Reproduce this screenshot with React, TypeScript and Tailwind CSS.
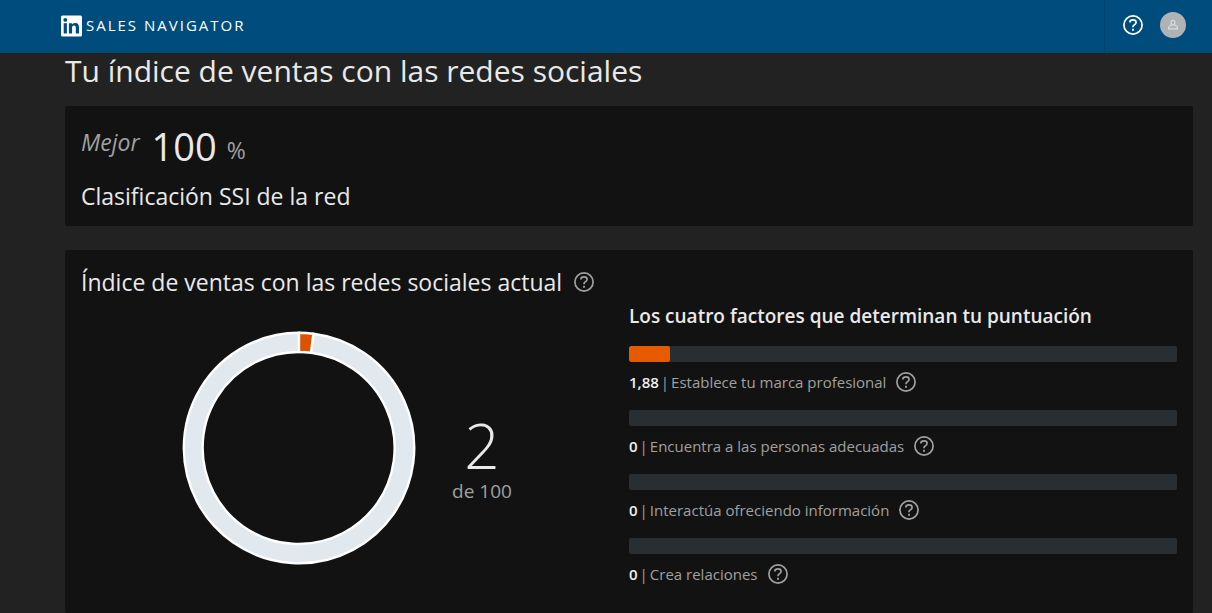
import clsx from "clsx";

const factors = [
  { score: "1,88", percent: 7.52, label: "Establece tu marca profesional" },
  { score: "0", percent: 0, label: "Encuentra a las personas adecuadas" },
  { score: "0", percent: 0, label: "Interactúa ofreciendo información" },
  { score: "0", percent: 0, label: "Crea relaciones" },
];

const HelpIcon = ({ className }: { className?: string }) => (
  <svg
    className={clsx("size-5 shrink-0", className)}
    viewBox="0 0 20 20"
    fill="none"
    aria-hidden="true"
  >
    <circle cx="10" cy="10" r="9.1" stroke="currentColor" strokeWidth="1.7" />
    <path
      d="M6.9 7.6V7.2C6.9 5.7 8.1 4.8 10 4.8s3.1 1 3.1 2.5c0 1.2-.6 1.9-1.6 2.4-.9.5-1.5.9-1.5 2v.5"
      stroke="currentColor"
      strokeWidth="1.7"
    />
    <rect x="9" y="13.7" width="2" height="2" rx="0.5" fill="currentColor" />
  </svg>
);

const HelpButton = ({ label, className }: { label: string; className?: string }) => (
  <button type="button" aria-label={label} className={clsx("cursor-pointer", className)}>
    <HelpIcon />
  </button>
);

const Logo = () => (
  <a href="#" className="flex items-center gap-1 text-white">
    <svg className="size-[22px]" viewBox="0 0 22 22" aria-hidden="true">
      <rect x="1" y="0.5" width="21" height="21" rx="1.5" fill="#fff" />
      <circle cx="5.3" cy="4.9" r="1.9" fill="#004c7c" />
      <rect x="3.7" y="8.2" width="3.2" height="10.3" fill="#004c7c" />
      <path
        d="M8.900 8.200h3v1.400c.5-.9 1.600-1.700 3.200-1.700 3 0 3.900 2 3.900 4.600v6h-3.200v-5.300c0-1.400-.2-2.700-1.800-2.700s-1.900 1.200-1.900 2.600v5.400H8.900z"
        fill="#004c7c"
      />
    </svg>
    <span className="text-[15px] tracking-[2px] uppercase">Sales Navigator</span>
  </a>
);

const Header = () => (
  <header className="flex h-[53px] shrink-0 bg-[#004c7c] pl-15">
    <div className="flex h-[51px] items-center">
      <Logo />
    </div>
    <div className="ml-auto flex items-center gap-[17px] border-l border-[#004470] pr-[26px] pb-[3px] pl-[18px]">
      <HelpButton label="Ayuda" className="text-white" />
      <button
        type="button"
        aria-label="Cuenta"
        className="flex size-[26px] cursor-pointer items-center justify-center rounded-full bg-[#b0b3b6] text-[#dcdee0]"
      >
        <svg
          className="size-3"
          viewBox="0 0 12 12"
          fill="none"
          stroke="currentColor"
          strokeWidth="1.1"
          aria-hidden="true"
        >
          <path d="M6 1.2c1.2 0 1.9.8 1.9 2S7.2 6 6 6 4.1 4.400 4.100 3.200s.7-2 1.900-2z" />
          <path d="M4.600 5.800 2.200 7.400c-.5.400-.7.800-.7 1.400v1.100h9V8.800c0-.6-.2-1-.7-1.400L7.400 5.800" />
        </svg>
      </button>
    </div>
  </header>
);

const ScoreRing = () => (
  <svg
    className="size-[234px] shrink-0"
    viewBox="-117 -117 234 234"
    role="img"
    aria-label="2 de 100"
  >
    <g stroke="#fff" strokeWidth="2.4" strokeLinejoin="round">
      <path
        d="M14.4 -114.3A115.2 115.2 0 1 1 0 -115.2V-96A96 96 0 1 0 12 -95.2Z"
        fill="#e1e8ee"
      />
      <path d="M0 -115.2A115.2 115.2 0 0 1 14.4 -114.3L12 -95.2A96 96 0 0 0 0 -96Z" fill="#dd5200" />
    </g>
  </svg>
);

const Factor = ({ score, percent, label }: (typeof factors)[number]) => (
  <li>
    <div className="h-4 overflow-hidden rounded-xs bg-[#282e32]">
      <div className="h-full rounded-xs bg-[#e65a00]" style={{ width: `${percent}%` }} />
    </div>
    <div className="mt-2 flex h-6 items-center text-[15px] text-[#a0a0a0]">
      <p className="flex gap-0.5">
        <strong className="font-semibold text-[#efefef]">{score}</strong>
        <span>|</span>
        <span>{label}</span>
      </p>
      <HelpButton label={`Ayuda: ${label}`} className="ml-2.5" />
    </div>
  </li>
);

export default function App() {
  return (
    <div className="flex min-h-screen flex-col bg-[#222] font-['Open_Sans','Noto_Sans',sans-serif] text-[#e9e9e9]">
      <Header />
      <main className="flex grow flex-col pr-[19px] pl-[65px]">
        <h1 className="text-[30px] leading-9">Tu índice de ventas con las redes sociales</h1>

        <section className="mt-[17px] rounded-xs bg-[#121212] px-4 pt-4 pb-3">
          <div className="flex h-12 items-center">
            <em className="mb-2 text-[23px] text-[#a0a0a0]">Mejor</em>
            <span className="ml-3 text-[38px] leading-12">100</span>
            <span className="mt-2 ml-2.5 text-[23px] text-[#a0a0a0]">%</span>
          </div>
          <h2 className="mt-2 text-[23px] leading-9">Clasificación SSI de la red</h2>
        </section>

        <section className="mt-6 grow rounded-xs bg-[#121212] px-4 pt-[14px] pb-6">
          <div className="flex items-center gap-3">
            <h2 className="text-[23px] leading-9">Índice de ventas con las redes sociales actual</h2>
            <HelpButton label="Ayuda: índice de ventas" className="text-[#a0a0a0]" />
          </div>
          <div className="grid grid-cols-2">
            <div className="flex items-start justify-center gap-9 pt-[31px] pr-4">
              <ScoreRing />
              <div className="pt-20 text-center">
                <p className="text-[62px] leading-[68px] font-light">2</p>
                <p className="text-[19px] leading-6 text-[#a0a0a0]">de 100</p>
              </div>
            </div>
            <div>
              <h3 className="text-[19px] leading-8 font-semibold">
                Los cuatro factores que determinan tu puntuación
              </h3>
              <ul className="mt-[14px] flex flex-col gap-4">
                {factors.map((factor) => (
                  <Factor key={factor.label} {...factor} />
                ))}
              </ul>
            </div>
          </div>
        </section>
      </main>
    </div>
  );
}
